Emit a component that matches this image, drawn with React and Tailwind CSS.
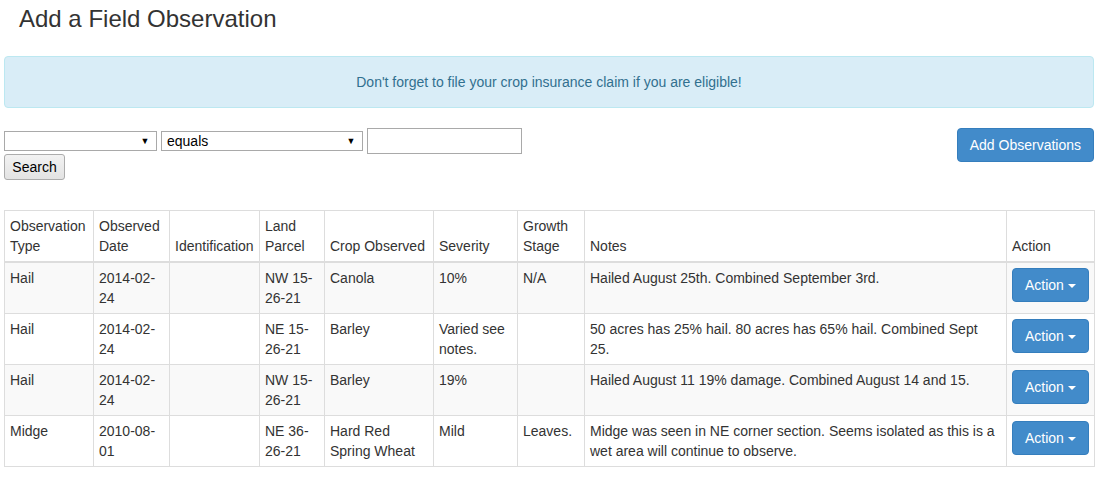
import React from "react";

const rows = [
  {
    type: "Hail",
    date: ["2014-02-", "24"],
    parcel: ["NW 15-", "26-21"],
    crop: "Canola",
    severity: "10%",
    stage: "N/A",
    notes: ["Hailed August 25th. Combined September 3rd."],
  },
  {
    type: "Hail",
    date: ["2014-02-", "24"],
    parcel: ["NE 15-", "26-21"],
    crop: "Barley",
    severity: "Varied see notes.",
    stage: "",
    notes: ["50 acres has 25% hail. 80 acres has 65% hail. Combined Sept", "25."],
  },
  {
    type: "Hail",
    date: ["2014-02-", "24"],
    parcel: ["NW 15-", "26-21"],
    crop: "Barley",
    severity: "19%",
    stage: "",
    notes: ["Hailed August 11 19% damage. Combined August 14 and 15."],
  },
  {
    type: "Midge",
    date: ["2010-08-", "01"],
    parcel: ["NE 36-", "26-21"],
    crop: "Hard Red Spring Wheat",
    severity: "Mild",
    stage: "Leaves.",
    notes: ["Midge was seen in NE corner section. Seems isolated as this is a", "wet area will continue to observe."],
  },
];

function FakeSelect({ width, value }) {
  return (
    <div
      className="flex items-center h-[20px] border border-[#a9a9a9] bg-white text-[14px] leading-[18px] text-black"
      style={{ width }}
    >
      <span className="flex-1 pl-[5px]">{value}</span>
      <span className="w-[16px] text-[9px] leading-none text-black mr-[3px] text-center">▼</span>
    </div>
  );
}

function Caret() {
  return (
    <span className="inline-block w-0 h-0 ml-[4px] align-middle border-t-[4px] border-t-white border-x-[4px] border-x-transparent" />
  );
}

export default function App() {
  const th = "border border-[#ddd] border-b-2 px-[5px] py-[5px] font-normal text-left align-bottom";
  const td = "border border-[#ddd] px-[5px] py-[5px] align-top";
  return (
    <div className="pl-[4px] pr-[3px] pb-[16px] font-['Liberation_Sans',Arial,sans-serif] text-[14px] leading-[20px] text-[#333] bg-white">
      <h3 className="px-[15px] pt-[6px] mb-[24px] text-[24px] leading-[26px] font-normal">
        Add a Field Observation
      </h3>

      <div className="border border-[#bce8f1] bg-[#d9edf7] text-[#31708f] rounded-[4px] py-[15px] text-center">
        Don't forget to file your crop insurance claim if you are eligible!
      </div>

      <div className="mt-[20px] flex justify-between items-start">
        <div>
          <div className="flex items-center gap-[4px]">
            <FakeSelect width={153} value="" />
            <FakeSelect width={202} value="equals" />
            <div className="w-[155px] h-[26px] border border-[#a9a9a9] bg-white" />
          </div>
          <button className="h-[26px] w-[61px] border border-[#acacac] rounded-[3px] bg-gradient-to-b from-[#f2f2f2] to-[#e3e3e3] text-[14px] text-black leading-none">
            Search
          </button>
        </div>
        <button className="h-[34px] px-[12px] border border-[#357ebd] bg-[#428bca] rounded-[4px] text-white text-[14px] leading-[20px]">
          Add Observations
        </button>
      </div>

      <table className="mt-[30px] w-full table-fixed border-collapse border border-[#ddd]">
        <colgroup>
          <col style={{ width: 89 }} />
          <col style={{ width: 76 }} />
          <col style={{ width: 90 }} />
          <col style={{ width: 65 }} />
          <col style={{ width: 109 }} />
          <col style={{ width: 84 }} />
          <col style={{ width: 67 }} />
          <col style={{ width: 422 }} />
          <col style={{ width: 88 }} />
        </colgroup>
        <thead>
          <tr>
            <th className={th}>Observation Type</th>
            <th className={th}>Observed Date</th>
            <th className={th}>Identification</th>
            <th className={th}>Land Parcel</th>
            <th className={th}>Crop Observed</th>
            <th className={th}>Severity</th>
            <th className={th}>Growth Stage</th>
            <th className={th}>Notes</th>
            <th className={th}>Action</th>
          </tr>
        </thead>
        <tbody>
          {rows.map((r, i) => (
            <tr key={i} className={i % 2 === 0 ? "bg-[#f9f9f9]" : "bg-white"}>
              <td className={td}>{r.type}</td>
              <td className={td}>
                {r.date[0]}
                <br />
                {r.date[1]}
              </td>
              <td className={td}></td>
              <td className={td}>
                {r.parcel[0]}
                <br />
                {r.parcel[1]}
              </td>
              <td className={td}>{r.crop}</td>
              <td className={td}>{r.severity}</td>
              <td className={td}>{r.stage}</td>
              <td className={td}>
                {r.notes.map((n, k) => (
                  <React.Fragment key={k}>
                    {k > 0 && <br />}
                    {n}
                  </React.Fragment>
                ))}
              </td>
              <td className={td}>
                <button className="h-[34px] px-[12px] border border-[#357ebd] bg-[#428bca] rounded-[4px] text-white text-[14px] leading-[20px] whitespace-nowrap">
                  Action
                  <Caret />
                </button>
              </td>
            </tr>
          ))}
        </tbody>
      </table>
    </div>
  );
}
